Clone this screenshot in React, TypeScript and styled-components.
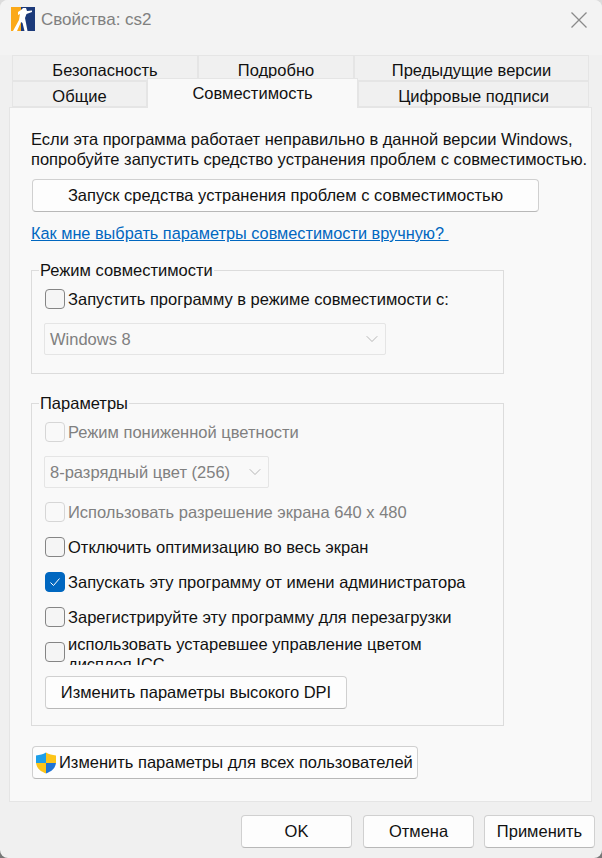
import React from "react";
import styled, { createGlobalStyle } from "styled-components";
import { ChevronDown } from "lucide-react";

const GlobalStyle = createGlobalStyle`
  html, body {
    margin: 0;
    padding: 0;
    background: linear-gradient(#dcdcdc, #777);
  }
`;

const Window = styled.div`
  width: 602px;
  height: 858px;
  box-sizing: border-box;
  background: #f0f0f0;
  border-radius: 8px;
  overflow: hidden;
  font-family: "Liberation Sans", Arial, sans-serif;
  font-size: 16.5px;
  color: #111;
  display: flex;
  flex-direction: column;
`;

const TitleBar = styled.div`
  height: 55px;
  flex: none;
  box-sizing: border-box;
  padding: 7px 15px 0 11px;
  display: flex;
  align-items: flex-start;
  background: #f3f3f3;
`;

const TitleText = styled.span`
  margin-left: 6px;
  margin-top: 3px;
  font-size: 17px;
  line-height: 20px;
  color: #808080;
`;

const CloseButton = styled.div`
  margin-left: auto;
  margin-top: 5px;
  width: 16px;
  height: 16px;
`;

const TabRow = styled.div`
  display: flex;
  height: 26px;
  flex: none;
  margin: 0 13px 0 12px;
`;

const Tab = styled.div<{ $w: number; $active?: boolean }>`
  width: ${(p) => p.$w}px;
  flex: none;
  box-sizing: border-box;
  display: flex;
  align-items: center;
  justify-content: center;
  background: ${(p) => (p.$active ? "#f9f9f9" : "#f0f0f0")};
  border: 1px solid #e5e5e5;
  border-bottom: ${(p) => (p.$active ? "none" : "1px solid #e5e5e5")};
  position: relative;
  z-index: ${(p) => (p.$active ? 2 : 0)};
  height: ${(p) => (p.$active ? "30px" : "26px")};
  margin-top: ${(p) => (p.$active ? "-3px" : "0")};
  padding-top: ${(p) => (p.$active ? "0" : "4px")};
`;

const Panel = styled.div`
  flex: none;
  width: 583px;
  height: 695px;
  margin-left: 9px;
  box-sizing: border-box;
  background: #f9f9f9;
  border: 1px solid #e5e5e5;
  padding: 21px 0 0 21px;
  position: relative;
  z-index: 1;
  display: flex;
  flex-direction: column;
  align-items: flex-start;
`;

const Intro = styled.div`
  line-height: 20px;
  white-space: nowrap;
`;

const Button = styled.div<{ $w: number; $mt?: number; $ml?: number; $mr?: number; $start?: boolean }>`
  width: ${(p) => p.$w}px;
  height: 33px;
  flex: none;
  box-sizing: border-box;
  margin: ${(p) => p.$mt ?? 0}px ${(p) => p.$mr ?? 0}px 0 ${(p) => p.$ml ?? 0}px;
  padding-left: ${(p) => (p.$start ? "2px" : "0")};
  gap: ${(p) => (p.$start ? "2px" : "0")};
  display: flex;
  align-items: center;
  justify-content: ${(p) => (p.$start ? "flex-start" : "center")};
  background: #fdfdfd;
  border: 1px solid #d0d0d0;
  border-bottom-color: #b8b8b8;
  border-radius: 4px;
  white-space: nowrap;
`;

const Link = styled.a`
  margin-top: 12px;
  font-size: 16.3px;
  line-height: 19px;
  color: #0067c0;
  text-decoration: underline;
  white-space: pre;
`;

const Group = styled.fieldset<{ $h: number; $mt: number }>`
  margin: ${(p) => p.$mt}px 0 0 0;
  width: 473px;
  height: ${(p) => p.$h}px;
  box-sizing: border-box;
  border: 1px solid #dcdcdc;
  padding: 0 0 0 12px;
  min-width: 0;
`;

const Legend = styled.legend`
  margin-left: -5px;
  padding: 0 1px;
  line-height: 19px;
`;

const CheckRow = styled.div<{ $mt?: number }>`
  display: flex;
  align-items: center;
  gap: 3px;
  height: 20px;
  margin: ${(p) => p.$mt ?? 0}px 0 0 1px;
`;

const TallRow = styled.div`
  display: flex;
  align-items: flex-start;
  gap: 3px;
  height: 31px;
  margin: 7px 0 0 1px;
`;

const Box = styled.div<{ $checked?: boolean; $disabled?: boolean; $mt?: number }>`
  width: 20px;
  height: 20px;
  flex: none;
  box-sizing: border-box;
  margin-top: ${(p) => p.$mt ?? 0}px;
  border-radius: 4px;
  border: 1px solid ${(p) => (p.$checked ? "#0067c0" : p.$disabled ? "#d6d6d6" : "#858585")};
  background: ${(p) => (p.$checked ? "#0067c0" : p.$disabled ? "#f9f9f9" : "#f5f5f5")};
  display: flex;
  align-items: center;
  justify-content: center;
`;

const RowLabel = styled.span<{ $disabled?: boolean }>`
  color: ${(p) => (p.$disabled ? "#808080" : "#111")};
  line-height: 19px;
  white-space: nowrap;
`;

const ClippedLabel = styled.div`
  height: 31px;
  overflow: hidden;
  line-height: 20px;
  width: 400px;
`;

const Select = styled.div<{ $w: number; $mt: number }>`
  width: ${(p) => p.$w}px;
  height: 32px;
  margin-top: ${(p) => p.$mt}px;
  box-sizing: border-box;
  border: 1px solid #e5e5e5;
  border-radius: 2px;
  background: #f9f9f9;
  color: #808080;
  padding: 0 3px 0 5px;
  display: flex;
  align-items: center;
  justify-content: space-between;
`;

const Footer = styled.div`
  display: flex;
  justify-content: flex-end;
  gap: 10px;
  padding: 13px 7px 0 0;
`;

const CsLogo = () => (
  <svg width="24" height="24" viewBox="0 0 24 24">
    <rect x="0" y="0" width="10" height="24" fill="#fba919" />
    <rect x="10" y="0" width="14" height="24" fill="#1c3a7a" />
    <path d="M12 1l3 0 1 3 5-.5 0 1.500-5.500 2-1.500 4 1 5 1.500 8-3 0-2-8-1.500-1L6 24 2 24l6-11 1-6-2 1 0-3 3-2z" fill="#fff" />
  </svg>
);

const Shield = () => (
  <svg width="22" height="22" viewBox="0 0 22 22">
    <path d="M11 0.500C8 2.500 5 3 1 3.500L1 11L11 11Z" fill="#1e9fe8" />
    <path d="M11 0.500C14 2.500 17 3 21 3.500L21 11L11 11Z" fill="#fcc419" />
    <path d="M1 11L11 11L11 21.500C6 19.500 2 17 1 11Z" fill="#fcc419" />
    <path d="M21 11L11 11L11 21.500C16 19.500 20 17 21 11Z" fill="#1f74d6" />
  </svg>
);

const CheckMark = () => (
  <svg width="12" height="12" viewBox="0 0 12 12">
    <path d="M1.500 6.500L4.500 9.500L10.500 2.500" fill="none" stroke="#fff" strokeWidth="1" />
  </svg>
);

export default function App() {
  return (
    <Window>
      <GlobalStyle />
      <TitleBar>
        <CsLogo />
        <TitleText>Свойства: cs2</TitleText>
        <CloseButton>
          <svg width="16" height="16" viewBox="0 0 16 16">
            <path d="M0.500 0.500L15.500 15.500M15.500 0.500L0.500 15.500" stroke="#8a8a8a" strokeWidth="1.300" />
          </svg>
        </CloseButton>
      </TitleBar>

      <TabRow>
        <Tab $w={186}>Безопасность</Tab>
        <Tab $w={156}>Подробно</Tab>
        <Tab $w={235}>Предыдущие версии</Tab>
      </TabRow>
      <TabRow>
        <Tab $w={135}>Общие</Tab>
        <Tab $w={211} $active>Совместимость</Tab>
        <Tab $w={231}>Цифровые подписи</Tab>
      </TabRow>

      <Panel>
        <Intro>
          Если эта программа работает неправильно в данной версии Windows,
          <br />
          попробуйте запустить средство устранения проблем с совместимостью.
        </Intro>
        <Button $w={507} $mt={10} $ml={1}>Запуск средства устранения проблем с совместимостью</Button>
        <Link>{"Как мне выбрать параметры совместимости вручную? "}</Link>

        <Group $h={113} $mt={18}>
          <Legend>Режим совместимости</Legend>
          <CheckRow $mt={9}>
            <Box />
            <RowLabel>Запустить программу в режиме совместимости с:</RowLabel>
          </CheckRow>
          <Select $w={342} $mt={14}>
            Windows 8
            <ChevronDown size={20} strokeWidth={1} color="#a8a8a8" />
          </Select>
        </Group>

        <Group $h={332} $mt={20}>
          <Legend>Параметры</Legend>
          <CheckRow $mt={9}>
            <Box $disabled />
            <RowLabel $disabled>Режим пониженной цветности</RowLabel>
          </CheckRow>
          <Select $w={225} $mt={14}>
            8-разрядный цвет (256)
            <ChevronDown size={20} strokeWidth={1} color="#a8a8a8" />
          </Select>
          <CheckRow $mt={14}>
            <Box $disabled />
            <RowLabel $disabled>Использовать разрешение экрана 640 x 480</RowLabel>
          </CheckRow>
          <CheckRow $mt={15}>
            <Box />
            <RowLabel>Отключить оптимизацию во весь экран</RowLabel>
          </CheckRow>
          <CheckRow $mt={15}>
            <Box $checked>
              <CheckMark />
            </Box>
            <RowLabel>Запускать эту программу от имени администратора</RowLabel>
          </CheckRow>
          <CheckRow $mt={15}>
            <Box />
            <RowLabel>Зарегистрируйте эту программу для перезагрузки</RowLabel>
          </CheckRow>
          <TallRow>
            <Box $mt={8} />
            <ClippedLabel>использовать устаревшее управление цветом дисплея ICC</ClippedLabel>
          </TallRow>
          <Button $w={302} $mt={11} $ml={1}>Изменить параметры высокого DPI</Button>
        </Group>

        <Button $w={386} $mt={20} $ml={1} $start>
          <Shield />
          Изменить параметры для всех пользователей
        </Button>
      </Panel>

      <Footer>
        <Button $w={111} $mr={1}>OK</Button>
        <Button $w={111}>Отмена</Button>
        <Button $w={111}>Применить</Button>
      </Footer>
    </Window>
  );
}
